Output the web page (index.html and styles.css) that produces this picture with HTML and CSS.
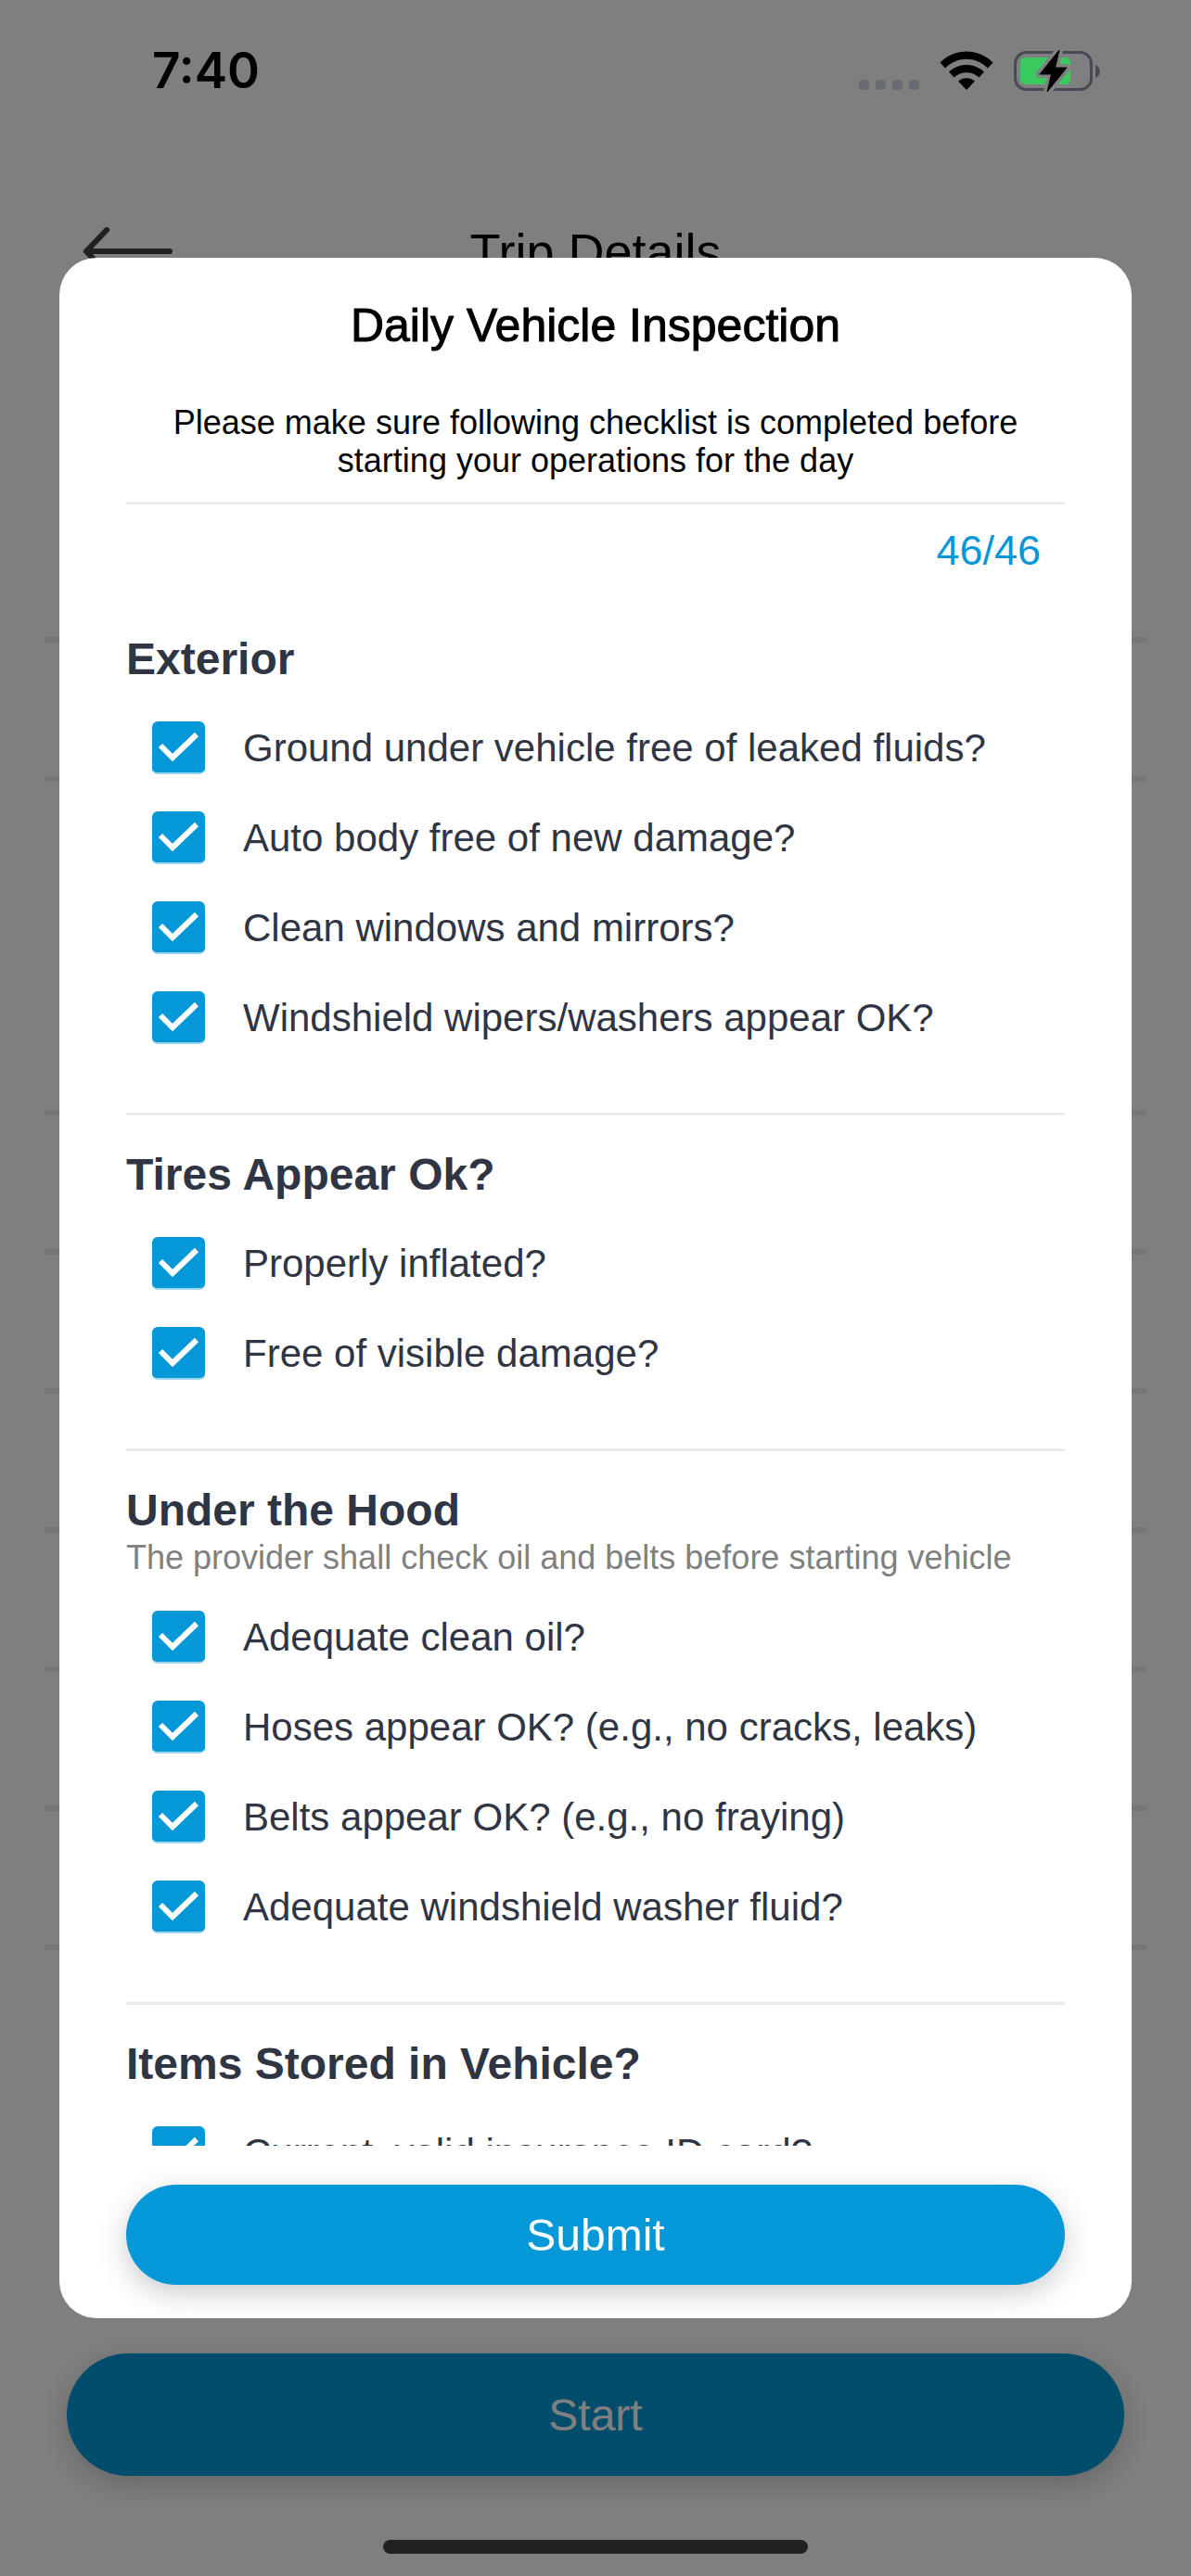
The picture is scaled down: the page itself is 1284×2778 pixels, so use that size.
FILE: index.html
```html
<!DOCTYPE html>
<html lang="en">
    <head>
        <meta charset="utf-8">
        <title>Daily Vehicle Inspection</title>
        <meta name="viewport" content="width=device-width, initial-scale=1">
        <link rel="stylesheet" href="styles.css">
    </head>

    <body>
        <div class="status-bar">
            <span class="time">7:40</span>
            <div class="status-icons">
                <svg class="signal" viewBox="0 0 65 43" aria-hidden="true">
                    <rect x="0" y="31" width="11" height="11" rx="4"/>
                    <rect x="18" y="31" width="11" height="11" rx="4"/>
                    <rect x="36" y="31" width="11" height="11" rx="4"/>
                    <rect x="54" y="31" width="11" height="11" rx="4"/>
                </svg>
                <svg class="wifi" viewBox="0 0 58 43" aria-hidden="true">
                    <path d="M0.5 12.5C16 -3.5 42 -3.5 57.5 12.5L52 18.5C39 5.5 19 5.5 6 18.5Z"/>
                    <path d="M10 22.5C20.5 12.5 37.5 12.5 48 22.5L42.5 28.5C35 21.5 23 21.5 15.5 28.5Z"/>
                    <path d="M20 32.5C25 28 33 28 38 32.5L29 42Z"/>
                </svg>
                <svg class="battery" viewBox="0 0 95 47" aria-hidden="true">
                    <rect class="battery-case" x="1.5" y="3.5" width="82" height="40" rx="12"/>
                    <path class="battery-nub" d="M88 17C94.5 19.5 94.5 28.5 88 31Z"/>
                    <rect class="battery-level" x="7" y="9" width="54" height="29" rx="5"/>
                    <path class="bolt-gap" d="M49 1L28 27H40.5L36 46L57 20H44.5Z"/>
                    <path class="bolt" d="M49 1L28 27H40.5L36 46L57 20H44.5Z"/>
                </svg>
            </div>
        </div>

        <div class="page">
            <div class="page-header">
                <button class="back" type="button" aria-label="Back">
                    <svg viewBox="0 0 98 52" aria-hidden="true">
                        <path d="M27 3L5 26L27 49M5 26H95"/>
                    </svg>
                </button>
                <h1>Trip Details</h1>
            </div>
            <ul class="trip-rows">
                <li class="first"></li>
                <li></li>
                <li class="tall"></li>
                <li></li>
                <li></li>
                <li></li>
                <li></li>
                <li></li>
                <li></li>
            </ul>
            <div class="page-footer">
                <button class="button start" type="button">Start</button>
                <div class="home-indicator"></div>
            </div>
        </div>

        <div class="backdrop">
            <form class="modal" role="dialog" aria-labelledby="modal-title">
                <h2 id="modal-title">Daily Vehicle Inspection</h2>
                <p class="intro">Please make sure following checklist is completed before starting your operations for the day</p>
                <div class="count">46/46</div>

                <div class="checklist">
                    <section>
                        <h3>Exterior</h3>
                        <ul>
                            <li><label><input type="checkbox" checked>Ground under vehicle free of leaked fluids?</label></li>
                            <li><label><input type="checkbox" checked>Auto body free of new damage?</label></li>
                            <li><label><input type="checkbox" checked>Clean windows and mirrors?</label></li>
                            <li><label><input type="checkbox" checked>Windshield wipers/washers appear OK?</label></li>
                        </ul>
                    </section>
                    <section>
                        <h3>Tires Appear Ok?</h3>
                        <ul>
                            <li><label><input type="checkbox" checked>Properly inflated?</label></li>
                            <li><label><input type="checkbox" checked>Free of visible damage?</label></li>
                        </ul>
                    </section>
                    <section>
                        <h3>Under the Hood</h3>
                        <p class="note">The provider shall check oil and belts before starting vehicle</p>
                        <ul>
                            <li><label><input type="checkbox" checked>Adequate clean oil?</label></li>
                            <li><label><input type="checkbox" checked>Hoses appear OK? (e.g., no cracks, leaks)</label></li>
                            <li><label><input type="checkbox" checked>Belts appear OK? (e.g., no fraying)</label></li>
                            <li><label><input type="checkbox" checked>Adequate windshield washer fluid?</label></li>
                        </ul>
                    </section>
                    <section>
                        <h3>Items Stored in Vehicle?</h3>
                        <ul>
                            <li><label><input type="checkbox" checked>Current, valid insurance ID card?</label></li>
                        </ul>
                    </section>
                </div>

                <button class="button submit" type="submit">Submit</button>
            </form>
        </div>
    </body>
</html>
```

FILE: styles.css
```css
*{
    box-sizing: border-box;
}

body{
    margin: 0;
    height: 100vh;
    display: flex;
    flex-direction: column;
    overflow: hidden;
    background: #fff;
    color: #000;
    font-family: "Helvetica Neue", "Liberation Sans", Arial, sans-serif;
}

h1, h2, h3, p, ul{
    margin: 0;
    padding: 0;
}

ul{
    list-style: none;
}

/* status bar stays above the backdrop */
.status-bar{
    position: relative;
    z-index: 2;
    height: 152px;
    padding: 0 96px 0 164px;
    display: flex;
    justify-content: space-between;
    align-items: center;
}

.time{
    font-family: Inter, sans-serif;
    font-size: 53px;
    font-weight: 600;
}

.status-icons{
    display: flex;
    align-items: center;
    gap: 22px;
}

.signal{
    width: 65px;
    height: 43px;
    fill: #696b73;
}

.wifi{
    width: 58px;
    height: 43px;
}

.battery{
    width: 95px;
    height: 47px;
}

.battery-case{
    fill: none;
    stroke: #474955;
    stroke-width: 3;
}

.battery-nub{
    fill: #474955;
}

.battery-level{
    fill: #3ac95d;
}

.bolt-gap{
    fill: #808080;
    stroke: #808080;
    stroke-width: 8;
    stroke-linejoin: round;
}

.bolt{
    stroke: #000;
    stroke-width: 1;
    stroke-linejoin: round;
}

/* trip details page */
.page{
    flex: 1;
    display: flex;
    flex-direction: column;
}

.page-header{
    height: 238px;
    padding: 0 88px;
    display: grid;
    grid-template-columns: 1fr auto 1fr;
    align-items: center;
}

.back{
    width: 98px;
    padding: 0;
    border: 0;
    background: none;
}

.back svg{
    display: block;
    width: 98px;
    height: 52px;
    fill: none;
    stroke: #424242;
    stroke-width: 6;
    stroke-linecap: round;
    stroke-linejoin: round;
}

h1{
    font-size: 54px;
    font-weight: normal;
}

.trip-rows{
    margin: 0 48px;
}

.trip-rows li{
    height: 150px;
    border-bottom: 6px solid #ececec;
}

.trip-rows .first{
    height: 303px;
}

.trip-rows .tall{
    height: 360px;
}

.page-footer{
    margin-top: auto;
    padding: 0 72px 24px;
    display: flex;
    flex-direction: column;
    align-items: center;
    gap: 69px;
}

.home-indicator{
    width: 458px;
    height: 15px;
    border-radius: 8px;
    background: #444;
}

.button{
    width: 100%;
    flex: none;
    padding: 0;
    border: 0;
    border-radius: 66px;
    background: #0598d8;
    box-shadow: 0 9px 30px rgba(45, 50, 65, 0.25);
    color: #fff;
    font-family: inherit;
    font-size: 48px;
}

.start{
    height: 132px;
}

.submit{
    height: 108px;
    margin-top: 42px;
}

/* inspection modal */
.backdrop{
    position: fixed;
    inset: 0;
    z-index: 1;
    padding: 278px 64px;
    display: flex;
    background: rgba(0, 0, 0, 0.5);
}

.modal{
    flex: 1;
    min-width: 0;
    padding: 43px 72px 36px;
    display: flex;
    flex-direction: column;
    border-radius: 40px;
    background: #fff;
}

h2{
    font-size: 50px;
    font-weight: normal;
    line-height: 60px;
    text-align: center;
    -webkit-text-stroke: 1px #000;
}

.intro{
    margin-top: 54px;
    padding: 0 16px 24px;
    font-size: 36px;
    line-height: 41px;
    text-align: center;
}

.count{
    border-top: 3px solid #ebebeb;
    padding: 20px 26px 23px 0;
    color: #0598d8;
    font-size: 45px;
    line-height: 60px;
    text-align: right;
}

.checklist{
    flex: 1;
    min-height: 0;
    overflow-y: auto;
    scrollbar-width: none;
    color: #303544;
}

section{
    padding: 34px 0 74px;
}

section + section{
    border-top: 3px solid #ebebeb;
}

h3{
    font-size: 48px;
    line-height: 60px;
}

.note{
    color: #808080;
    font-size: 36px;
    line-height: 41px;
}

.checklist ul{
    margin-top: 37px;
    padding-left: 28px;
    display: flex;
    flex-direction: column;
    gap: 40px;
}

label{
    display: flex;
    align-items: center;
    gap: 41px;
    font-size: 42px;
    line-height: 57px;
}

input{
    appearance: none;
    flex: none;
    width: 57px;
    height: 57px;
    margin: 0;
    border: 2px solid #0598d8;
    border-radius: 6px;
}

input:checked{
    border: 0;
    border-bottom: 2px solid #9bd6ef;
    background: #0598d8 url("data:image/svg+xml,%3Csvg xmlns='http://www.w3.org/2000/svg' viewBox='0 0 57 55'%3E%3Cpath d='M9 26L22 39L48 14' fill='none' stroke='%23fff' stroke-width='6'/%3E%3C/svg%3E") no-repeat center / 57px 55px;
}
```
